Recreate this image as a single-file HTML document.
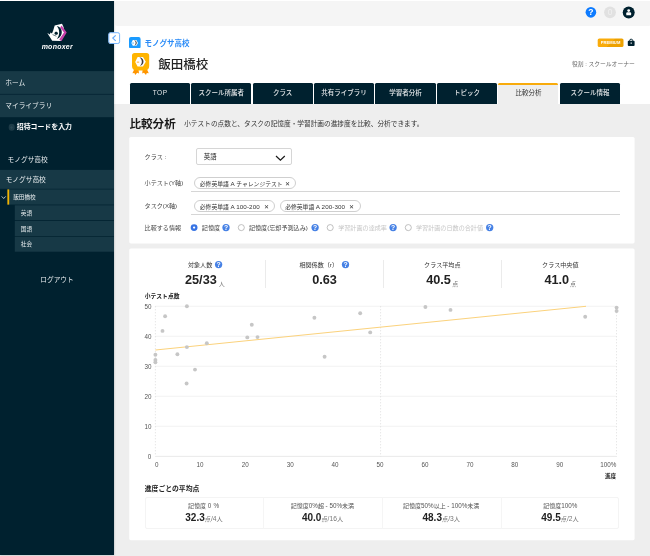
<!DOCTYPE html>
<html lang="ja">
<head>
<meta charset="utf-8">
<title>比較分析</title>
<style>
*{box-sizing:border-box;margin:0;padding:0}
html,body{width:650px;height:556px;overflow:hidden;background:#eeeeee}
body{font-family:"Liberation Sans","Noto Sans CJK JP",sans-serif;color:#222;position:relative;font-size:6px;line-height:1;will-change:transform}
.abs{position:absolute;white-space:nowrap}
.c{position:absolute;white-space:nowrap;transform:translateY(-50%);line-height:1}
.cc{position:absolute;white-space:nowrap;transform:translate(-50%,-50%);line-height:1}
#side{position:absolute;left:0;top:0;width:114px;height:555.4px;background:#00212f;box-shadow:0.4px 0 2px rgba(0,20,30,.3)}
#side .row{position:absolute;left:0;width:114px;background:#173946}
#side .c,#side .cc{color:#e9eef0}
#topbar{position:absolute;left:116px;top:1px;width:534px;height:23.6px;background:#f5f5f5;box-shadow:0 0.6px 1.4px rgba(0,0,0,.14)}
#head{position:absolute;left:114px;top:0;width:536px;height:103.8px;background:#fff}
.tab{position:absolute;top:83px;height:20.8px;width:60.2px;background:#00212f;color:rgba(255,255,255,.9);font-size:6.5px;font-weight:500;text-align:center;line-height:20.2px;border-radius:1.5px 1.5px 0 0;white-space:nowrap}
.tab.act{background:#eeeeee;color:#333;border-top:2px solid #f8ab0c;line-height:16.2px;font-weight:400}
.card{position:absolute;left:129.5px;width:505px;background:#fff;border-radius:1.5px}
.lbl{font-size:6.1px;color:#444}
.chip{position:absolute;height:12.4px;border:0.7px solid #cfcfcf;border-radius:6.2px;font-size:5.8px;line-height:11px;color:#333;white-space:nowrap;background:#fff;padding-left:4.7px;letter-spacing:0}
.chip i{font-style:normal;font-size:6.25px;letter-spacing:0.1px}
.chip .x{position:absolute;right:5.7px;top:0;font-size:6.4px;letter-spacing:0}
.hr{position:absolute;height:1px;background:#d6d6d6}
.q{position:absolute;width:7.5px;height:7.5px;border-radius:50%;background:#3f7ae2;color:#fff;font-size:6px;font-weight:bold;text-align:center;line-height:7.7px;transform:translate(-50%,-50%)}
.radio{position:absolute;width:6.8px;height:6.8px;border-radius:50%;border:0.7px solid #a8a8a8;background:#fff;transform:translate(-50%,-50%)}
.radio.on{border:2.1px solid #2f6fe0}
.sl{font-size:6.1px;color:#333}
.sv{font-size:12.7px;font-weight:bold;color:#222}
.su{font-size:6px;color:#777}
.vsep{position:absolute;width:1px;background:#ebebeb}
.tl{font-size:6px;color:#555}
.tl i{font-style:normal;font-size:6.3px}
.tv{font-size:6.2px;color:#777}
.tv b{font-size:10px;color:#222}
.tv i{font-style:normal;font-size:6.7px}
</style>
</head>
<body>
<div id="head"></div>
<div id="topbar"></div>
<div id="side">
  <svg class="abs" style="left:45px;top:22px" width="24" height="21" viewBox="45 22 24 21">
    <polygon points="47.3,33 49.9,34.5 50.4,32.4 52,33.6 53.2,30.6 54.7,25.6 62,23.8 63.5,27 64.6,32.4 60,39.4 61.4,40.9 52.2,40.7" fill="#fff"/>
    <polygon points="61.6,25.6 66.7,32.4 61.5,41 59.2,39.4 64,32.4 60.2,27.6" fill="#c640aa"/>
    <path d="M56.8 26 C63 26.8 64 36.6 56.8 39 C60 35.6 60 29.6 56.8 26Z" fill="#00212f"/>
    <path d="M54.4 33.4 C54.6 31.4 57.6 31.2 58 33.4 C57.6 35 55 35.2 54.4 33.4Z" fill="#00212f"/>
    <path d="M52.6 34.6 L56.4 36.2" stroke="#00212f" stroke-width="0.6"/>
  </svg>
  <div class="cc" style="left:57.3px;top:46.2px;font-size:7px;font-style:italic;font-weight:bold;letter-spacing:0.25px;color:#fff">monoxer</div>
  <svg class="abs" style="left:0;top:60px" width="114" height="200" viewBox="0 60 114 200">
    <g fill="#173946">
      <rect x="0" y="71.1" width="114" height="22.8"/>
      <rect x="0" y="94.6" width="114" height="22.6"/>
      <rect x="0" y="169.9" width="114" height="18.9"/>
      <rect x="7.4" y="189.4" width="106.6" height="15.2"/>
      <rect x="14.8" y="205.3" width="99.2" height="14.7"/>
      <rect x="14.8" y="220.8" width="99.2" height="15.2"/>
      <rect x="14.8" y="236.7" width="99.2" height="15"/>
    </g>
    <rect x="7.4" y="189.4" width="1.8" height="15.2" fill="#f0b400"/>
  </svg>
  <div class="c" style="left:5.3px;top:82.7px;font-size:6.7px">ホーム</div>
  <div class="c" style="left:5.3px;top:105.6px;font-size:6.7px">マイライブラリ</div>
  <div class="cc" style="left:11.5px;top:127px;width:6.6px;height:6.6px;border-radius:50%;background:#1d3b47;color:#2c4a56;font-size:6px;line-height:6.4px;text-align:center;font-weight:bold">+</div>
  <div class="c" style="left:16.8px;top:127px;font-size:6.9px;font-weight:bold;color:#fff">招待コードを入力</div>
  <div class="c" style="left:7.6px;top:159.8px;font-size:6.7px;font-weight:400">モノグサ高校</div>
  <div class="c" style="left:5.7px;top:179.5px;font-size:6.7px;font-weight:400">モノグサ高校</div>
  <div class="c" style="left:13.2px;top:198.4px;font-size:5.6px">飯田橋校</div>
  <svg class="abs" style="left:1px;top:195px" width="6" height="5" viewBox="0 0 6 5"><path d="M0.7 1.4 L2.7 3.5 L4.7 1.4" stroke="#dfe6e9" stroke-width="0.8" fill="none"/></svg>
  <div class="c" style="left:20.8px;top:213.7px;font-size:5.6px">英語</div>
  <div class="c" style="left:20.8px;top:229.9px;font-size:5.6px">国語</div>
  <div class="c" style="left:20.8px;top:245.3px;font-size:5.6px">社会</div>
  <div class="cc" style="left:57px;top:279.7px;font-size:6.7px">ログアウト</div>
</div>
<div class="abs" style="left:0;top:0;width:650px;height:1.1px;background:#fff"></div>
<!-- top icons -->
<svg class="abs" style="left:622px;top:5px" width="14" height="15" viewBox="-0.2 -0.95 14 15"><circle cx="6.5" cy="6.5" r="6.4" fill="#fff"/><circle cx="6.5" cy="6.5" r="6" fill="#00212f"/><circle cx="6.5" cy="4.6" r="1.4" fill="#fff"/><path d="M4.1 9.2 V7.2 Q4.1 6.2 5.1 6.2 H7.9 Q8.9 6.2 8.9 7.2 V9.2 Z" fill="#fff"/></svg>
<!-- collapse button -->
<svg class="abs" style="left:106px;top:30px" width="17" height="17" viewBox="106 30 17 17"><rect x="108.4" y="32.3" width="11.6" height="11.6" rx="2.2" fill="#d9e9fb" opacity="0.7"/><rect x="108.8" y="32.7" width="10.8" height="10.8" rx="1.8" fill="#fff" stroke="#7ab6fb" stroke-width="1"/><path d="M115.7 35.4 L112.8 38.1 L115.7 40.8" stroke="#62a8fb" stroke-width="1.15" fill="none"/></svg>
<!-- breadcrumb -->
<svg class="abs" style="left:129.3px;top:36.9px" width="11.6" height="11.6" viewBox="0 0 11.6 11.6"><rect width="11.6" height="11.6" rx="2" fill="#1a9bff"/><polygon points="2.4,6 3.8,3 7.4,3 9,5.9 7.4,8.8 3.8,8.8" fill="#fff"/><path d="M5.2 3.2 C8.6 3.6 8.6 8 5.4 8.5 C7.2 7.2 7.2 4.4 5.2 3.2Z" fill="#444"/><rect x="3.2" y="5.7" width="1.8" height="0.7" fill="#1a9bff"/></svg>
<div class="c" style="left:144.6px;top:44px;font-size:7.5px;font-weight:bold;color:#2a8bf7">モノグサ高校</div>
<svg class="abs" style="left:132.4px;top:53.1px" width="17.2" height="22" viewBox="0 0 17.2 22"><path d="M2.4 16 L0.4 20.2 L2.4 19.9 L3.2 21.9 L5.2 19.7 L7 20.6 L6.6 17 Z M14.8 16 L16.8 20.2 L14.8 19.9 L14 21.9 L12 19.7 L10.2 20.6 L10.6 17 Z" fill="#ff9500"/><path d="M2.6 0 H14.6 A2.6 2.6 0 0 1 17.2 2.6 V13 Q17.2 17.6 12 17.6 H5.2 Q0 17.6 0 13 V2.6 A2.6 2.6 0 0 1 2.6 0 Z" fill="#ffb400"/><polygon points="3.2,8.9 5.6,3.9 11,3.9 13.8,8.7 11,13.4 5.6,13.4" fill="#fff"/><path d="M7.4 4.3 C12.8 4.8 12.8 12.2 7.8 12.9 C10.6 11 10.6 6.4 7.4 4.3Z" fill="#3a3a3a"/><rect x="4.8" y="8.7" width="2.4" height="0.8" fill="#ff9500"/></svg>
<div class="c" style="left:158.2px;top:65.2px;font-size:12.5px;font-weight:500;color:#222">飯田橋校</div>
<svg class="abs" style="left:596px;top:37px" width="40" height="11" viewBox="596 37 40 11"><defs><linearGradient id="pg" x1="0" y1="0" x2="1" y2="0.35"><stop offset="0.6" stop-color="#f9ab0a"/><stop offset="0.62" stop-color="#eda100"/></linearGradient></defs><rect x="597.7" y="38.5" width="25.8" height="8.5" rx="1.6" fill="url(#pg)"/><path d="M629.6 41.2 V40.7 A1.55 1.55 0 0 1 632.7 40.7 V41.2" stroke="#00212f" stroke-width="0.9" fill="none"/><rect x="627.8" y="40.8" width="6.8" height="5.1" rx="0.9" fill="#00212f"/><rect x="630.7" y="42.2" width="0.9" height="1.9" rx="0.3" fill="#fff"/></svg>
<div class="cc" style="left:610.5px;top:42.8px;color:#fff;font-size:4.1px;font-weight:bold;letter-spacing:0.05px">PREMIUM</div>
<div class="c" style="left:572px;top:64.7px;font-size:5.8px;color:#666">役割 : スクールオーナー</div>
<!-- tabs -->
<div class="tab" style="left:130.0px;letter-spacing:0.5px">TOP</div>
<div class="tab" style="left:191.2px">スクール所属者</div>
<div class="tab" style="left:252.6px">クラス</div>
<div class="tab" style="left:314.0px">共有ライブラリ</div>
<div class="tab" style="left:375.4px">学習者分析</div>
<div class="tab" style="left:436.9px">トピック</div>
<div class="tab act" style="left:498.3px">比較分析</div>
<div class="tab" style="left:559.6px;width:60.6px">スクール情報</div>
<!-- title -->
<div class="c" style="left:129.4px;top:124.2px;font-size:11.6px;font-weight:bold;color:#1a1a1a">比較分析</div>
<div class="c" style="left:184.2px;top:124.3px;font-size:6.68px;color:#333">小テストの点数と、タスクの記憶度・学習計画の進捗度を比較、分析できます。</div>
<!-- card1 -->
<svg class="abs" style="left:128px;top:135px" width="509" height="407" viewBox="128 135 509 407"><rect x="129.25" y="136.9" width="505.35" height="106.5" rx="1.6" fill="#fff"/><rect x="129.25" y="248.4" width="505.35" height="291.8" rx="1.6" fill="#fff"/></svg>
<div class="c lbl" style="left:144.6px;top:157.1px">クラス :</div>
<div class="abs" style="left:196px;top:148.4px;width:95.6px;height:17px;border:0.7px solid #d6d6d6;border-radius:2px;background:#fff"></div>
<div class="c" style="left:203.8px;top:157.1px;font-size:6.4px;color:#222">英語</div>
<svg class="abs" style="left:275px;top:154.6px" width="11" height="6.4" viewBox="0 0 11 6.4"><path d="M1 1 L5.4 5.2 L9.8 1" stroke="#1a1a1a" stroke-width="1.2" fill="none"/></svg>
<div class="c lbl" style="left:144.6px;top:183px">小テスト(Y軸)</div>
<div class="chip" style="left:194.1px;top:176.9px;width:102.1px">必修英単語 <i>A</i> チャレンジテスト<span class="x">✕</span></div>
<div class="hr" style="left:190.7px;top:191.4px;width:429px"></div>
<div class="c lbl" style="left:144.6px;top:205.6px">タスク(X軸)</div>
<div class="chip" style="left:194.1px;top:199.5px;width:81.4px">必修英単語 <i>A 100-200</i><span class="x">✕</span></div>
<div class="chip" style="left:279.5px;top:199.5px;width:81.6px">必修英単語 <i>A 200-300</i><span class="x">✕</span></div>
<div class="hr" style="left:190.7px;top:213.8px;width:429px"></div>
<div class="c lbl" style="left:144.6px;top:227.6px">比較する情報</div>
<div class="c lbl" style="left:201.8px;top:227.6px">記憶度</div>
<div class="c lbl" style="left:248.9px;top:227.6px">記憶度(忘却予測込み)</div>
<div class="c lbl" style="left:338.2px;top:227.6px;color:#c6c6c6">学習計画の達成率</div>
<div class="c lbl" style="left:416px;top:227.6px;color:#c6c6c6">学習計画の日数の合計値</div>
<!-- card2 -->
<div class="c sl" style="left:187.9px;top:264.6px">対象人数</div>
<div class="c sv" style="left:185px;top:279.7px">25/33</div>
<div class="c su" style="left:218.8px;top:284.2px">人</div>
<div class="vsep" style="left:265px;top:260px;height:28px"></div>
<div class="c sl" style="left:299.4px;top:264.6px">相関係数（r）</div>
<div class="c sv" style="left:312.2px;top:279.7px">0.63</div>
<div class="vsep" style="left:383.2px;top:260px;height:28px"></div>
<div class="c sl" style="left:424.1px;top:264.6px">クラス平均点</div>
<div class="c sv" style="left:426.2px;top:279.7px">40.5</div>
<div class="c su" style="left:452.2px;top:284.2px">点</div>
<div class="vsep" style="left:501.2px;top:260px;height:28px"></div>
<div class="c sl" style="left:542.1px;top:264.6px">クラス中央値</div>
<div class="c sv" style="left:544.4px;top:279.7px">41.0</div>
<div class="c su" style="left:570.1px;top:284.2px">点</div>
<div class="c" style="left:144.7px;top:297.1px;font-size:5.8px;font-weight:bold;color:#222">小テスト点数</div>
<!-- chart -->
<svg class="abs" style="left:130px;top:298px" width="502" height="185" viewBox="130 298 502 185" font-family="'Liberation Sans','Noto Sans CJK JP',sans-serif">
  <g stroke="#efefef" stroke-width="0.8">
    <line x1="155.4" y1="306.3" x2="616.6" y2="306.3"/>
    <line x1="155.4" y1="336.3" x2="616.6" y2="336.3"/>
    <line x1="155.4" y1="366.3" x2="616.6" y2="366.3"/>
    <line x1="155.4" y1="396.3" x2="616.6" y2="396.3"/>
    <line x1="155.4" y1="426.3" x2="616.6" y2="426.3"/>
    <line x1="155.4" y1="456.4" x2="616.6" y2="456.4" stroke="#e5e5e5"/>
  </g>
  <g stroke="#dcdcdc" stroke-width="0.7" stroke-dasharray="1.4 1.6">
    <line x1="155.4" y1="306" x2="155.4" y2="456.5"/>
    <line x1="380.6" y1="306" x2="380.6" y2="456.5"/>
    <line x1="616.5" y1="306" x2="616.5" y2="456.5"/>
  </g>
  <line x1="155.4" y1="350" x2="586" y2="306.3" stroke="#fbd27c" stroke-width="1"/>
  <g fill="#c6c6c6">
    <circle cx="155.4" cy="354.7" r="1.95"/><circle cx="155.4" cy="359.9" r="1.95"/><circle cx="155.4" cy="362.3" r="1.95"/>
    <circle cx="162.5" cy="330.9" r="1.95"/><circle cx="165.1" cy="316.2" r="1.95"/>
    <circle cx="177.4" cy="354.2" r="1.95"/>
    <circle cx="186.9" cy="306.3" r="1.95"/><circle cx="186.9" cy="347.1" r="1.95"/><circle cx="186.6" cy="383.5" r="1.95"/>
    <circle cx="195" cy="369.6" r="1.95"/><circle cx="206.8" cy="343.2" r="1.95"/>
    <circle cx="247.3" cy="337.4" r="1.95"/><circle cx="251.8" cy="324.8" r="1.95"/><circle cx="257.5" cy="337.1" r="1.95"/>
    <circle cx="314.4" cy="317.8" r="1.95"/><circle cx="324.6" cy="356.8" r="1.95"/>
    <circle cx="360.2" cy="313.3" r="1.95"/><circle cx="370.2" cy="332.4" r="1.95"/>
    <circle cx="425.4" cy="307" r="1.95"/><circle cx="450.5" cy="309.9" r="1.95"/>
    <circle cx="585.2" cy="316.7" r="1.95"/>
    <circle cx="616.6" cy="307.6" r="1.95"/><circle cx="616.6" cy="311" r="1.95"/>
  </g>
  <g font-size="6.3" fill="#555" text-anchor="end">
    <text x="151.4" y="308.9">50</text><text x="151.4" y="338.9">40</text><text x="151.4" y="368.9">30</text>
    <text x="151.4" y="398.9">20</text><text x="151.4" y="428.9">10</text><text x="151.2" y="458.7">0</text>
  </g>
  <g font-size="6.3" fill="#555" text-anchor="middle">
    <text x="156.7" y="466.6">0</text><text x="200" y="466.6">10</text><text x="245.2" y="466.6">20</text>
    <text x="290.2" y="466.6">30</text><text x="335.1" y="466.6">40</text><text x="379.9" y="466.6">50</text>
    <text x="424.9" y="466.6">60</text><text x="469.9" y="466.6">70</text><text x="514.7" y="466.6">80</text>
    <text x="559.7" y="466.6">90</text>
  </g>
  <text x="616.3" y="466.6" font-size="6.3" fill="#555" text-anchor="end">100%</text>
  <text x="616.3" y="477.9" font-size="5.7" font-weight="bold" fill="#222" text-anchor="end">進度</text>
</svg>
<div class="c" style="left:144.7px;top:488.8px;font-size:6.85px;font-weight:bold;color:#222">進度ごとの平均点</div>
<div class="abs" style="left:144.9px;top:497px;width:474.5px;height:31.6px;border:0.8px solid #f4f4f4;border-radius:2px"></div>
<div class="vsep" style="left:263px;top:497px;height:31.6px;background:#f5f5f5"></div>
<div class="vsep" style="left:382px;top:497px;height:31.6px;background:#f5f5f5"></div>
<div class="vsep" style="left:501.2px;top:497px;height:31.6px;background:#f5f5f5"></div>
<div class="cc tl" style="left:203.8px;top:506px">記憶度 <i style="letter-spacing:0.3px">0 %</i></div>
<div class="cc tv" style="left:204px;top:517.5px"><b>32.3</b>点<i>/4</i>人</div>
<div class="cc tl" style="left:322.4px;top:506px">記憶度<i>0%</i>超 <i>- 50%</i>未満</div>
<div class="cc tv" style="left:322.5px;top:517.5px"><b>40.0</b>点<i>/16</i>人</div>
<div class="cc tl" style="left:441.2px;top:506px">記憶度<i>50%</i>以上 <i>- 100%</i>未満</div>
<div class="cc tv" style="left:441.2px;top:517.5px"><b>48.3</b>点<i>/3</i>人</div>
<div class="cc tl" style="left:560.2px;top:506px">記憶度<i>100%</i></div>
<div class="cc tv" style="left:560px;top:517.5px"><b>49.5</b>点<i>/2</i>人</div>
<svg class="abs" style="left:0;top:0;pointer-events:none" width="650" height="556" viewBox="0 0 650 556" font-family="'Liberation Sans',sans-serif">
<circle cx="226.0" cy="227.6" r="3.65" fill="#4681e5"/><text x="226.0" y="230.0" font-size="6.8" font-weight="bold" fill="#fff" text-anchor="middle">?</text>
<circle cx="315.1" cy="227.6" r="3.65" fill="#4681e5"/><text x="315.1" y="230.0" font-size="6.8" font-weight="bold" fill="#fff" text-anchor="middle">?</text>
<circle cx="393.1" cy="227.6" r="3.65" fill="#4681e5"/><text x="393.1" y="230.0" font-size="6.8" font-weight="bold" fill="#fff" text-anchor="middle">?</text>
<circle cx="489.7" cy="227.6" r="3.65" fill="#4681e5"/><text x="489.7" y="230.0" font-size="6.8" font-weight="bold" fill="#fff" text-anchor="middle">?</text>
<circle cx="218.6" cy="264.6" r="3.65" fill="#4681e5"/><text x="218.6" y="267.0" font-size="6.8" font-weight="bold" fill="#fff" text-anchor="middle">?</text>
<circle cx="345.5" cy="264.6" r="3.65" fill="#4681e5"/><text x="345.5" y="267.0" font-size="6.8" font-weight="bold" fill="#fff" text-anchor="middle">?</text>
<circle cx="194.1" cy="227.6" r="2.28" fill="#fff" stroke="#3874e4" stroke-width="2.3"/>
<circle cx="241.3" cy="227.6" r="3.05" fill="#fff" stroke="#a6a6a6" stroke-width="0.7"/>
<circle cx="330.2" cy="227.6" r="3.05" fill="#fff" stroke="#a6a6a6" stroke-width="0.7"/>
<circle cx="408.3" cy="227.6" r="3.05" fill="#fff" stroke="#a6a6a6" stroke-width="0.7"/>
<circle cx="590.9" cy="12.35" r="5.3" fill="#0d7bff"/><text x="590.9" y="15.4" font-size="8.6" font-weight="bold" fill="#fff" text-anchor="middle">?</text>
<circle cx="610" cy="12.35" r="5.9" fill="#e1e1e1"/><text x="610" y="15.3" font-size="8.4" fill="#f0f0f0" text-anchor="middle">0</text>
</svg>
</body>
</html>
